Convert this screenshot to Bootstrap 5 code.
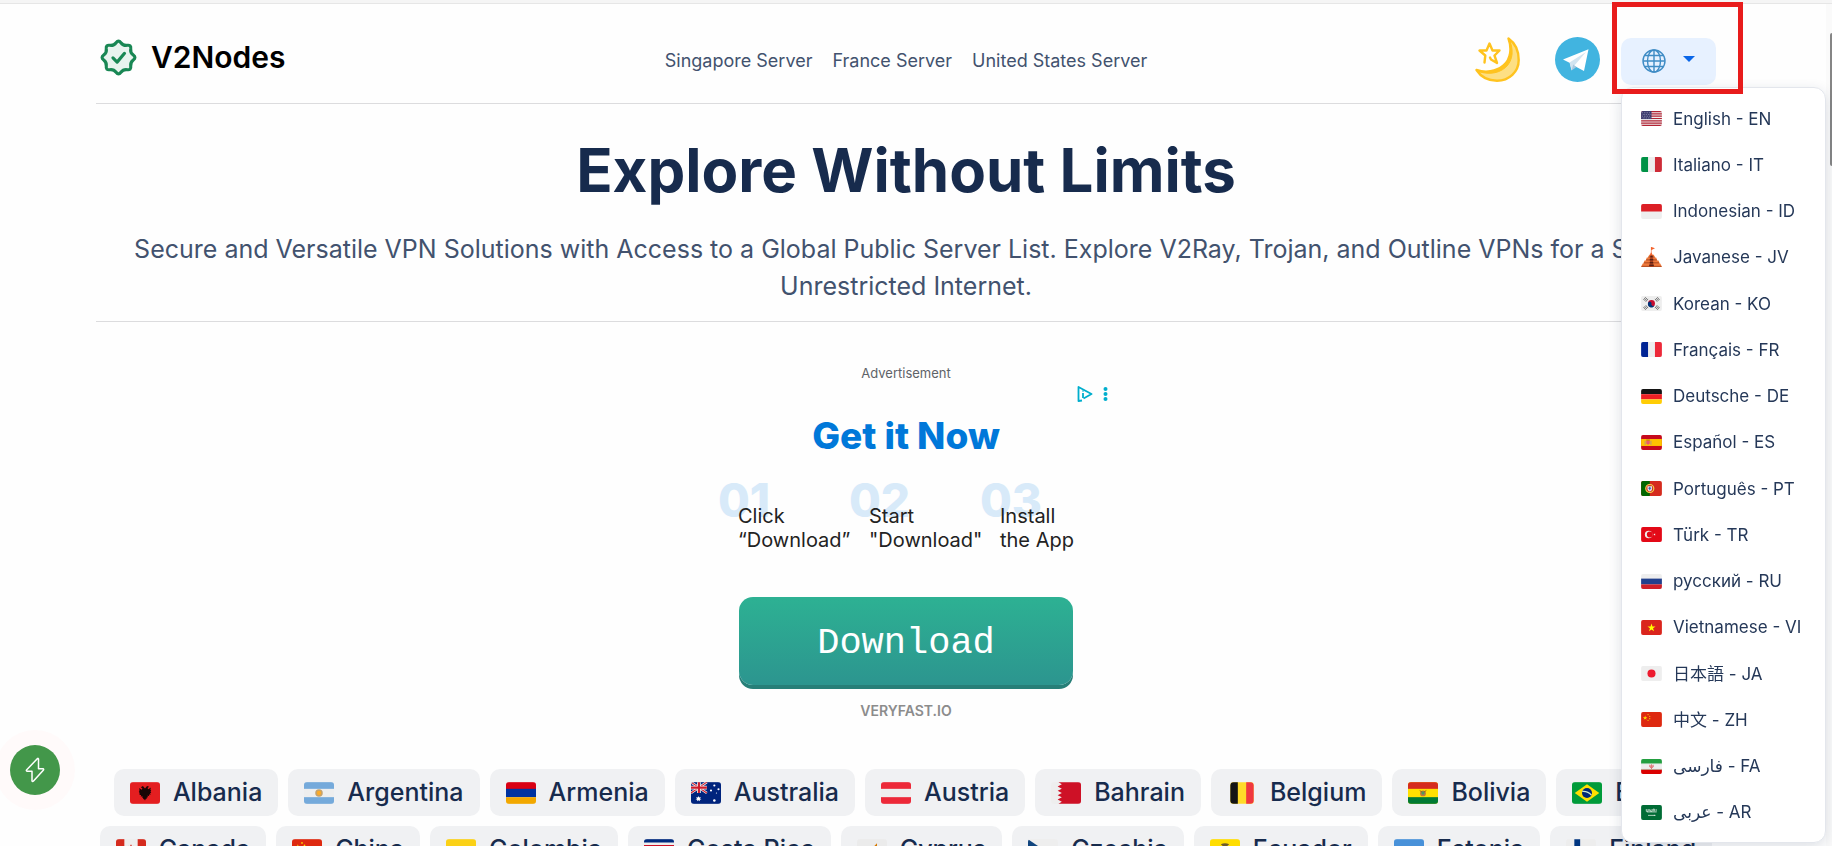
<!DOCTYPE html>
<html lang="en">
<head>
<meta charset="utf-8">
<meta name="viewport" content="width=device-width, initial-scale=1">
<title>V2Nodes - Explore Without Limits</title>
<link href="https://cdn.jsdelivr.net/npm/bootstrap@5.3.0/dist/css/bootstrap.min.css" rel="stylesheet">
<style>
  body { font-family: Inter, "Noto Sans CJK SC", "DejaVu Sans", sans-serif; color: #172b4d; background: #fefefe; }
  .page-shell { height: 100vh; overflow: hidden; }
  .top-strip { height: 4px; background: #f5f5f5; border-bottom: 1px solid #e6e6e6; }
  .page-body { padding: 0 116px 0 96px; }
  .site-header { display: grid; grid-template-columns: 1fr auto 1fr; align-items: center; padding: 33px 0 18px; border-bottom: 1px solid #dcdcde; }
  .brand-link { font-size: 30px; line-height: 40px; font-weight: 600; color: #000; gap: 14px; padding: 0 0 8px 4px; }
  .top-links { gap: 20px; font-size: 18px; line-height: 24px; }
  .top-links a { color: #42526e; text-decoration: none; }
  .tools { gap: 21px; }
  .btn-icon { border: 0; padding: 0 0 3px; background: none; display: block; line-height: 0; }
  .btn-moon { margin-right: 14px; }
  .btn-lang { width: 95px; height: 47px; background: #e7f1ff; border: 0; border-radius: 10px; color: #0d6efd; gap: 17px; }
  .btn-lang:hover { background: #d9e8ff; }
  .lang-menu { top: 49px; left: 0; width: 205px; min-width: 0; min-height: calc(100vh - 90px); padding: 8px 0 6px; border: 1px solid #e3e6ec; border-radius: 12px; background: #fff; box-shadow: 0 4px 14px rgba(23,43,77,.14); z-index: 20; }
  .lang-menu .dropdown-item { padding: 0 0 0 19px; gap: 11px; font-size: 17px; line-height: 46px; color: #253858; }
  .flag { display: block; flex: none; width: 21px; height: 15px; border-radius: 2px; }
  .highlight { position: absolute; z-index: 30; top: -36px; left: -9px; width: 131px; height: 92px; border: 5px solid #e81c1c; pointer-events: none; }
  .hero { padding: 30px 0 16px; border-bottom: 1px solid #dcdcde; text-align: center; }
  .hero h1 { font-size: 60px; line-height: 72px; font-weight: 700; margin: 0 0 25px; color: #172b4d; }
  .hero p { font-size: 25px; line-height: 37px; color: #42526e; margin: 0; }
  .promo { width: 420px; padding-top: 41px; }
  .promo-label { font-size: 13px; line-height: 20px; color: #5f6368; }
  .promo-marks { height: 16px; margin-top: 3px; gap: 10px; padding-right: 8px; }
  .promo-title { font-size: 37px; line-height: 44px; font-weight: 800; color: #0078d9; margin: 12px 0 19px; text-align: center; }
  .promo-steps { display: grid; grid-template-columns: repeat(3, 131px); padding-left: 42px; margin: 0; list-style: none; }
  .promo-steps li { position: relative; padding-top: 27px; font-size: 20px; line-height: 24px; color: #222; white-space: nowrap; }
  .promo-steps b { position: absolute; z-index: -1; top: 0; left: -20px; font-size: 46px; line-height: 46px; font-weight: 800; color: #d8eaf9; }
  .btn-download { width: 334px; height: 88px; margin-top: 45px; border: 0; border-radius: 14px; color: #fff; background: linear-gradient(#2db193, #2c958f); box-shadow: 0 4px 0 #277f78; font: 37px/44px "Liberation Mono", monospace; padding: 4px 0 0; }
  .promo-host { font-size: 14px; line-height: 20px; font-weight: 600; color: #8c8c8c; margin-top: 16px; }
  .chips { gap: 10px; margin-top: 48px; }
  .chip { height: 47px; padding: 0 16px; gap: 13px; border-radius: 10px; background: #f0f1f3; color: #172b4d; font-size: 25px; font-weight: 500; text-decoration: none; }
  .chip .flag { width: 30px; height: 22px; border-radius: 3px; }
  .boost { position: fixed; left: 10px; bottom: 51px; width: 50px; height: 50px; border: 0; border-radius: 50%; background: #43974a; box-shadow: 0 0 0 15px #fffafa; padding: 0; }
  .scroll-rail { position: fixed; top: 4px; right: 0; bottom: 0; width: 6px; background: #fafafa; }
  .scroll-rail span { display: block; margin: 29px 0 0 4px; height: 133px; background: #858585; border-radius: 4px 0 0 4px; }
</style>
</head>
<body>
<svg width="0" height="0" class="position-absolute" aria-hidden="true">
  <symbol id="us" viewBox="0 0 36 26"><rect width="36" height="26" fill="#eee"/><path d="M0 1h36M0 5h36M0 9h36M0 13h36M0 17h36M0 21h36M0 25h36" stroke="#b22334" stroke-width="2"/><rect width="18" height="14" fill="#3c3b6e"/><path d="M2 3h15M3 6h13M2 9h15M3 12h13" stroke="#fff" stroke-width="1" stroke-dasharray="1 2"/></symbol>
  <symbol id="it" viewBox="0 0 36 26"><rect width="36" height="26" fill="#eee"/><rect width="12" height="26" fill="#009246"/><rect x="24" width="12" height="26" fill="#ce2b37"/></symbol>
  <symbol id="id" viewBox="0 0 36 26"><rect width="36" height="26" fill="#eee"/><rect width="36" height="13" fill="#dc1f26"/></symbol>
  <symbol id="jv" viewBox="0 0 36 34"><path d="M17 0h1l6 2-6 3v4l2 5h-5l2-5z" fill="#f4622c"/><path d="M14 13h8l2 5H12zM10 18h16l2 5H8zM6 23h24l2 5H4zM3 28h30l3 6H0z" fill="#f07a3c"/><path d="M13 17h10M9 22h18M5 27h26M1 33h34" stroke="#a8461f" stroke-width="1.600"/><path d="M15 34l1-20h4l1 20z" fill="#c24a22"/><path d="M16 15h4v3h-4zM15 20h6v3h-6zM15 25h6v3h-6zM14 30h8v3h-8z" fill="#5c2114"/></symbol>
  <symbol id="kr" viewBox="0 0 36 26"><rect width="36" height="26" fill="#eee"/><circle cx="18" cy="13" r="6" fill="#c60c30"/><path d="M12.500 11a6 6 0 1 0 11 4.500A3 3 0 0 1 18 13a3 3 0 0 0-5.500-2z" fill="#003478"/><g stroke="#444" stroke-width="1.200"><path d="M4 7l4-5M6 8.500l4-5M8 10l4-5M28 2l4 5M26 3.500l4 5M24 5l4 5M4 19l4 5M6 17.500l4 5M8 16l4 5M28 24l4-5M26 22.500l4-5M24 21l4-5"/></g></symbol>
  <symbol id="fr" viewBox="0 0 36 26"><rect width="36" height="26" fill="#eee"/><rect width="12" height="26" fill="#002495"/><rect x="24" width="12" height="26" fill="#ed2939"/></symbol>
  <symbol id="de" viewBox="0 0 36 26"><rect width="36" height="9" fill="#141414"/><rect y="9" width="36" height="9" fill="#ed1f24"/><rect y="18" width="36" height="8" fill="#ffcd05"/></symbol>
  <symbol id="es" viewBox="0 0 36 26"><rect width="36" height="26" fill="#c60a1d"/><rect y="7" width="36" height="12" fill="#ffc400"/><path d="M9 10h6v5l-3 2-3-2z" fill="#ea596e"/><path d="M7 10v7M17 10v7" stroke="#aa8e8e" stroke-width="1.500"/><path d="M9 8h6v2H9z" fill="#c8701e"/></symbol>
  <symbol id="pt" viewBox="0 0 36 26"><rect width="36" height="26" fill="#d52b1e"/><rect width="15" height="26" fill="#060"/><circle cx="15" cy="13" r="7" fill="#d52b1e" stroke="#f5d84b" stroke-width="2"/><path d="M11 9h8v5q0 3-4 4-4-1-4-4z" fill="#eee"/><path d="M15 10v6M12.500 12.500h5" stroke="#1b4fa8" stroke-width="1.600"/></symbol>
  <symbol id="tr" viewBox="0 0 36 26"><rect width="36" height="26" fill="#e30917"/><circle cx="13" cy="13" r="6.500" fill="#eee"/><circle cx="15" cy="13" r="5" fill="#e30917"/><path d="M21 13l4-1.300-2.500 3.500v-4.400L25 14.300z" fill="#eee"/></symbol>
  <symbol id="ru" viewBox="0 0 36 26"><rect width="36" height="26" fill="#eee"/><rect y="8" width="36" height="10" fill="#22408c"/><rect y="18" width="36" height="8" fill="#ce2028"/></symbol>
  <symbol id="vn" viewBox="0 0 36 26"><rect width="36" height="26" fill="#da251d"/><path d="M18 6l1.700 5.100H25l-4.300 3.200 1.600 5.200-4.300-3.200-4.300 3.200 1.600-5.200-4.300-3.200h5.300z" fill="#ff0"/></symbol>
  <symbol id="jp" viewBox="0 0 36 26"><rect width="36" height="26" fill="#eee"/><circle cx="18" cy="13" r="7" fill="#ed1b2f"/></symbol>
  <symbol id="cn" viewBox="0 0 36 26"><rect width="36" height="26" fill="#de2910"/><path d="M7 6l1 2.900h3l-2.400 1.800.9 2.900L7 11.800l-2.500 1.800.9-2.900L3 8.900h3z" fill="#ffde02"/><g fill="#ffde02"><circle cx="12" cy="4.500" r="1"/><circle cx="15" cy="7.500" r="1"/><circle cx="15" cy="11.500" r="1"/><circle cx="12" cy="14.500" r="1"/></g></symbol>
  <symbol id="ir" viewBox="0 0 36 26"><rect width="36" height="26" fill="#eee"/><rect width="36" height="8" fill="#239f40"/><rect y="18" width="36" height="8" fill="#da0000"/><path d="M0 8h36M0 18h36" stroke="#a9d3b4"/><path d="M15 10q-2 4 3 6 5-2 3-6M18 9v8M16.500 11v3M19.500 11v3" fill="none" stroke="#da3a3a"/></symbol>
  <symbol id="sa" viewBox="0 0 36 26"><rect width="36" height="26" fill="#006c35"/><path d="M9 7v4h3V7M14 11V7M16 8v3h3V7M21 11V7h2v4M26 7v4M10 12h17M12 18h13M23 17v2" fill="none" stroke="#e6f0ea" stroke-width="1.300"/></symbol>
  <symbol id="al" viewBox="0 0 36 26"><rect width="36" height="26" fill="#e41e20"/><path d="M18 7.500l-2.500-3-2.500 1.500 2 1.500-1 1.500-3-2 .5 3-1 .5 1 1.500-1 1 1.500 1-.8 1.500 2-.2-.2 2.200 2-1-.5 2 1.500.5-.5 1.500 1.300-.3L18 22l1.200-2.300 1.300.3-.5-1.500 1.500-.5-.5-2 2 1-.2-2.200 2 .2-.8-1.500 1.500-1-1-1 1-1.500-1-.5.500-3-3 2-1-1.500 2-1.500L20.500 4.500z" fill="#1a0505"/></symbol>
  <symbol id="ar" viewBox="0 0 36 26"><rect width="36" height="26" fill="#eee"/><rect width="36" height="8" fill="#75aadb"/><rect y="18" width="36" height="8" fill="#75aadb"/><circle cx="18" cy="13" r="4.500" fill="#c6a26b"/><circle cx="18" cy="13" r="2.600" fill="#fcab28"/></symbol>
  <symbol id="am" viewBox="0 0 36 26"><rect width="36" height="9" fill="#d90012"/><rect y="8" width="36" height="10" fill="#0033a0"/><rect y="18" width="36" height="8" fill="#f2a800"/></symbol>
  <symbol id="au" viewBox="0 0 36 26"><rect width="36" height="26" fill="#00247d"/><path d="M0 0l19 13M19 0L0 13" stroke="#eee" stroke-width="3"/><path d="M0 0l19 13M19 0L0 13" stroke="#cf1b2b" stroke-width="1.300"/><path d="M9.500 0v13M0 6.500h19" stroke="#eee" stroke-width="4.500"/><path d="M9.500 0v13M0 6.500h19" stroke="#cf1b2b" stroke-width="2.500"/><g fill="#fff"><path d="M9 16.500l.8 1.900 2-.6-1 1.800 1.700 1-2 .4.100 2-1.600-1.300L7.400 23l.100-2-2-.4 1.700-1-1-1.800 2 .6z"/><circle cx="28" cy="4" r="1.300"/><circle cx="24" cy="10" r="1.300"/><circle cx="33" cy="8.500" r="1.300"/><circle cx="28" cy="22" r="1.500"/><circle cx="30.500" cy="13" r=".7"/></g></symbol>
  <symbol id="at" viewBox="0 0 36 26"><rect width="36" height="26" fill="#eee"/><rect width="36" height="8" fill="#ed2939"/><rect y="18" width="36" height="8" fill="#ed2939"/></symbol>
  <symbol id="bh" viewBox="0 0 36 26"><rect width="36" height="26" fill="#eee"/><path d="M36 0H9l4 2.600-5 2.600 5 2.600-5 2.600L13 13l-5 2.600 5 2.600-5 2.600 5 2.600L9 26h27z" fill="#ce1126"/></symbol>
  <symbol id="be" viewBox="0 0 36 26"><rect x="4" width="28" height="26" rx="3" fill="#ffda29"/><path d="M13 0H8a4 4 0 0 0-4 4v18a4 4 0 0 0 4 4h5z" fill="#141414"/><path d="M23 0h5a4 4 0 0 1 4 4v18a4 4 0 0 1-4 4h-5z" fill="#f0373f"/></symbol>
  <symbol id="bo" viewBox="0 0 36 26"><rect width="36" height="26" fill="#ffe000"/><rect width="36" height="8" fill="#d52b1e"/><rect y="18" width="36" height="8" fill="#007a33"/><circle cx="18" cy="13.500" r="3.500" fill="#c3793a"/><circle cx="18" cy="13" r="2" fill="#4f9a60"/><path d="M14 10l3 2M22 10l-3 2" stroke="#8b5a24"/></symbol>
  <symbol id="br" viewBox="0 0 36 26"><rect width="36" height="26" fill="#009b3a"/><path d="M18 2.500L32.700 13 18 23.500 3.300 13z" fill="#fedf01"/><circle cx="18" cy="13" r="6" fill="#002776"/><path d="M12.300 11q7-.5 11 4.500" fill="none" stroke="#cbe9d4" stroke-width="1.500"/></symbol>
  <symbol id="ca" viewBox="0 0 36 26"><rect width="36" height="26" fill="#eee"/><rect width="10" height="26" fill="#d52b1e"/><rect x="26" width="10" height="26" fill="#d52b1e"/><path d="M18 6l1.500 3 2-1-.5 4 3-1-1 3-4 4h-2l-4-4-1-3 3 1-.5-4 2 1z" fill="#d52b1e"/></symbol>
  <symbol id="co" viewBox="0 0 36 26"><rect width="36" height="13" fill="#fbd116"/><rect y="13" width="36" height="7" fill="#22408c"/><rect y="20" width="36" height="6" fill="#ce2028"/></symbol>
  <symbol id="cr" viewBox="0 0 36 26"><rect width="36" height="26" fill="#eee"/><rect width="36" height="4" fill="#002b7f"/><rect y="7" width="36" height="12" fill="#ce1126"/><rect y="22" width="36" height="4" fill="#002b7f"/></symbol>
  <symbol id="cy" viewBox="0 0 36 26"><rect width="36" height="26" fill="#ebebeb"/><path d="M24 5l-4 4h-7l-3 4 6 2 8-6z" fill="#d57800"/></symbol>
  <symbol id="cz" viewBox="0 0 36 26"><rect width="36" height="26" fill="#eee"/><rect y="13" width="36" height="13" fill="#d7141a"/><path d="M0 0l19 13L0 26z" fill="#11457e"/></symbol>
  <symbol id="ec" viewBox="0 0 36 26"><rect width="36" height="14" fill="#fd0"/><rect y="14" width="36" height="6" fill="#034ea2"/><rect y="20" width="36" height="6" fill="#ed1c24"/><path d="M13 6q5-2 10 0l-2 2v8h-6V8z" fill="#6f5b2a"/></symbol>
  <symbol id="ee" viewBox="0 0 36 26"><rect width="36" height="9" fill="#4891d9"/><rect y="9" width="36" height="9" fill="#141414"/><rect y="18" width="36" height="8" fill="#eee"/></symbol>
  <symbol id="fi" viewBox="0 0 36 26"><rect width="36" height="26" fill="#ededed"/><path d="M13.500 0v26M0 13h36" stroke="#003580" stroke-width="7"/></symbol>
</svg>

<div class="page-shell">
  <div class="top-strip"></div>
  <div class="page-body">
    <header class="site-header">
      <a href="#" class="brand-link d-flex align-items-center text-decoration-none">
        <svg width="37" height="37" viewBox="0 0 40 40" fill="none" stroke="#198754" stroke-width="3.400" stroke-linecap="round" stroke-linejoin="round" aria-hidden="true"><path fill="#e8f3ee" d="M36 22.600Q32.500 25.200 33.200 29.500Q33.800 33.800 29.500 33.200Q25.200 32.500 22.600 36Q20 39.500 17.400 36Q14.800 32.500 10.500 33.200Q6.200 33.800 6.800 29.500Q7.500 25.200 4 22.600Q.5 20 4 17.400Q7.500 14.800 6.800 10.500Q6.200 6.200 10.500 6.800Q14.800 7.500 17.400 4Q20 .5 22.600 4Q25.200 7.500 29.500 6.800Q33.800 6.200 33.200 10.500Q32.500 14.800 36 17.400Q39.500 20 36 22.600z"/><path d="M14 20.500l4.500 4.500 8-9.500"/></svg>
        V2Nodes
      </a>
      <nav class="top-links d-flex" aria-label="Servers">
        <a href="#">Singapore Server</a>
        <a href="#">France Server</a>
        <a href="#">United States Server</a>
      </nav>
      <div class="tools d-flex align-items-center justify-content-end">
        <button type="button" class="btn-icon btn-moon" aria-label="Dark mode">
          <svg width="45" height="45" viewBox="0 0 45 45"><path d="M33.500 1.500C37 11 36 22 28.500 28.500S10 36 1.500 33C6 40 13 43.700 22 43.700 34 43.700 43.700 35 43.700 23c0-10-4.500-17.500-10.200-21.500z" fill="#fddf83" stroke="#ffc31f" stroke-width="2.400" stroke-linejoin="round"/><path d="M33.500 1.500C37 11 36 22 28.500 28.500S10 36 1.500 33c8 5 21 4.500 29-2.500S39 11 33.500 1.500z" fill="#ffc31f" stroke="#ffc31f"/><path d="M9.500 25.500l.8-7L4.500 13.500h7L14.500 6.500l3 7h7l-5 5 2.500 7.500-6-3.500-1-2" fill="none" stroke="#ffc31f" stroke-width="2.400" stroke-linejoin="round" stroke-linecap="round"/></svg>
        </button>
        <a href="#" class="btn-icon" aria-label="Telegram">
          <svg width="45" height="45" viewBox="0 0 45 45"><circle cx="22.500" cy="22.500" r="22.500" fill="#41b4e0"/><path d="M8 22.500L33.500 12.200 29 34l-9.500-5-3 4L15 26z" fill="#fff"/><path d="M14.500 25.500L31 15 19 29l-2.500 4.500z" fill="#d2e4f0"/><path d="M16.500 33.500l1.700-6 3.300 2.500z" fill="#a9c9e0"/></svg>
        </a>
        <div class="dropdown">
          <button type="button" class="btn-lang d-flex align-items-center justify-content-center" aria-expanded="true" aria-label="Language">
            <svg width="24" height="24" viewBox="0 0 24 24" fill="none" stroke="#3f8cc5" stroke-width="1.400"><circle cx="12" cy="12" r="11"/><ellipse cx="12" cy="12" rx="6.500" ry="11"/><path d="M12 1v22M1 12h22M3 6.500h18M3 17.500h18"/></svg>
            <svg width="12" height="10" viewBox="0 0 12 10"><path d="M0 0h12L6 6z" fill="#0a66e8"/></svg>
          </button>
          <div class="dropdown-menu show lang-menu d-flex flex-column justify-content-between">
            <a class="dropdown-item d-flex align-items-center" href="#"><svg class="flag"><use href="#us"/></svg>English - EN</a>
            <a class="dropdown-item d-flex align-items-center" href="#"><svg class="flag"><use href="#it"/></svg>Italiano - IT</a>
            <a class="dropdown-item d-flex align-items-center" href="#"><svg class="flag"><use href="#id"/></svg>Indonesian - ID</a>
            <a class="dropdown-item d-flex align-items-center" href="#"><svg class="flag rounded-0" style="height:20px"><use href="#jv"/></svg>Javanese - JV</a>
            <a class="dropdown-item d-flex align-items-center" href="#"><svg class="flag"><use href="#kr"/></svg>Korean - KO</a>
            <a class="dropdown-item d-flex align-items-center" href="#"><svg class="flag"><use href="#fr"/></svg>Français - FR</a>
            <a class="dropdown-item d-flex align-items-center" href="#"><svg class="flag"><use href="#de"/></svg>Deutsche - DE</a>
            <a class="dropdown-item d-flex align-items-center" href="#"><svg class="flag"><use href="#es"/></svg>Español - ES</a>
            <a class="dropdown-item d-flex align-items-center" href="#"><svg class="flag"><use href="#pt"/></svg>Português - PT</a>
            <a class="dropdown-item d-flex align-items-center" href="#"><svg class="flag"><use href="#tr"/></svg>Türk - TR</a>
            <a class="dropdown-item d-flex align-items-center" href="#"><svg class="flag"><use href="#ru"/></svg>русский - RU</a>
            <a class="dropdown-item d-flex align-items-center" href="#"><svg class="flag"><use href="#vn"/></svg>Vietnamese - VI</a>
            <a class="dropdown-item d-flex align-items-center" href="#"><svg class="flag"><use href="#jp"/></svg>日本語 - JA</a>
            <a class="dropdown-item d-flex align-items-center" href="#"><svg class="flag"><use href="#cn"/></svg>中文 - ZH</a>
            <a class="dropdown-item d-flex align-items-center" href="#"><svg class="flag"><use href="#ir"/></svg>فارسی - FA</a>
            <a class="dropdown-item d-flex align-items-center" href="#"><svg class="flag"><use href="#sa"/></svg>عربى - AR</a>
          </div>
          <div class="highlight"></div>
        </div>
      </div>
    </header>

    <main>
      <section class="hero">
        <h1>Explore Without Limits</h1>
        <p>Secure and Versatile VPN Solutions with Access to a Global Public Server List. Explore V2Ray, Trojan, and Outline VPNs for a Swift, Unrestricted Internet.</p>
      </section>

      <section class="promo mx-auto text-center position-relative z-0">
        <div class="promo-label">Advertisement</div>
        <div class="promo-marks d-flex justify-content-end align-items-center">
          <svg width="16" height="16" viewBox="0 0 16 16" fill="none" stroke="#00aecd" stroke-width="1.800" stroke-linejoin="round" aria-hidden="true"><path d="M5 14.500L1.500 15V1L14.500 8 6.500 12.500"/><path d="M6 7v5M6 4.500v1"/></svg>
          <svg width="5" height="16" viewBox="0 0 5 16" fill="#00aecd" aria-hidden="true"><circle cx="2.500" cy="3" r="2"/><circle cx="2.500" cy="8" r="2"/><circle cx="2.500" cy="13" r="2"/></svg>
        </div>
        <h2 class="promo-title">Get it Now</h2>
        <ol class="promo-steps text-start">
          <li><b>01</b>Click<br>“Download”</li>
          <li><b>02</b>Start<br>"Download"</li>
          <li><b>03</b>Install<br>the App</li>
        </ol>
        <button type="button" class="btn-download">Download</button>
        <div class="promo-host">VERYFAST.IO</div>
      </section>

      <section class="chips d-flex flex-wrap justify-content-center">
        <a href="#" class="chip d-flex align-items-center"><svg class="flag"><use href="#al"/></svg>Albania</a>
        <a href="#" class="chip d-flex align-items-center"><svg class="flag"><use href="#ar"/></svg>Argentina</a>
        <a href="#" class="chip d-flex align-items-center"><svg class="flag"><use href="#am"/></svg>Armenia</a>
        <a href="#" class="chip d-flex align-items-center"><svg class="flag"><use href="#au"/></svg>Australia</a>
        <a href="#" class="chip d-flex align-items-center"><svg class="flag"><use href="#at"/></svg>Austria</a>
        <a href="#" class="chip d-flex align-items-center"><svg class="flag"><use href="#bh"/></svg>Bahrain</a>
        <a href="#" class="chip d-flex align-items-center"><svg class="flag"><use href="#be"/></svg>Belgium</a>
        <a href="#" class="chip d-flex align-items-center"><svg class="flag"><use href="#bo"/></svg>Bolivia</a>
        <a href="#" class="chip d-flex align-items-center"><svg class="flag"><use href="#br"/></svg>Brazil</a>
        <a href="#" class="chip d-flex align-items-center"><svg class="flag"><use href="#ca"/></svg>Canada</a>
        <a href="#" class="chip d-flex align-items-center"><svg class="flag"><use href="#cn"/></svg>China</a>
        <a href="#" class="chip d-flex align-items-center"><svg class="flag"><use href="#co"/></svg>Colombia</a>
        <a href="#" class="chip d-flex align-items-center"><svg class="flag"><use href="#cr"/></svg>Costa Rica</a>
        <a href="#" class="chip d-flex align-items-center"><svg class="flag"><use href="#cy"/></svg>Cyprus</a>
        <a href="#" class="chip d-flex align-items-center"><svg class="flag"><use href="#cz"/></svg>Czechia</a>
        <a href="#" class="chip d-flex align-items-center"><svg class="flag"><use href="#ec"/></svg>Ecuador</a>
        <a href="#" class="chip d-flex align-items-center"><svg class="flag"><use href="#ee"/></svg>Estonia</a>
        <a href="#" class="chip d-flex align-items-center"><svg class="flag"><use href="#fi"/></svg>Finland</a>
      </section>
    </main>
  </div>
</div>

<button type="button" class="boost d-flex align-items-center justify-content-center" aria-label="Quick connect">
  <svg width="20" height="26" viewBox="0 0 20 26" fill="none" stroke="#fff" stroke-width="1.500" stroke-linejoin="round"><path d="M12.500 1.500L1.500 13q-.5 1 .5 1.200h5V24q.5 1 1.500 0L18.500 13q.5-1-.5-1.200h-4.500V2q-.3-1-1-.5z"/></svg>
</button>
<div class="scroll-rail"><span></span></div>
<script src="https://cdn.jsdelivr.net/npm/bootstrap@5.3.0/dist/js/bootstrap.bundle.min.js"></script>
</body>
</html>
